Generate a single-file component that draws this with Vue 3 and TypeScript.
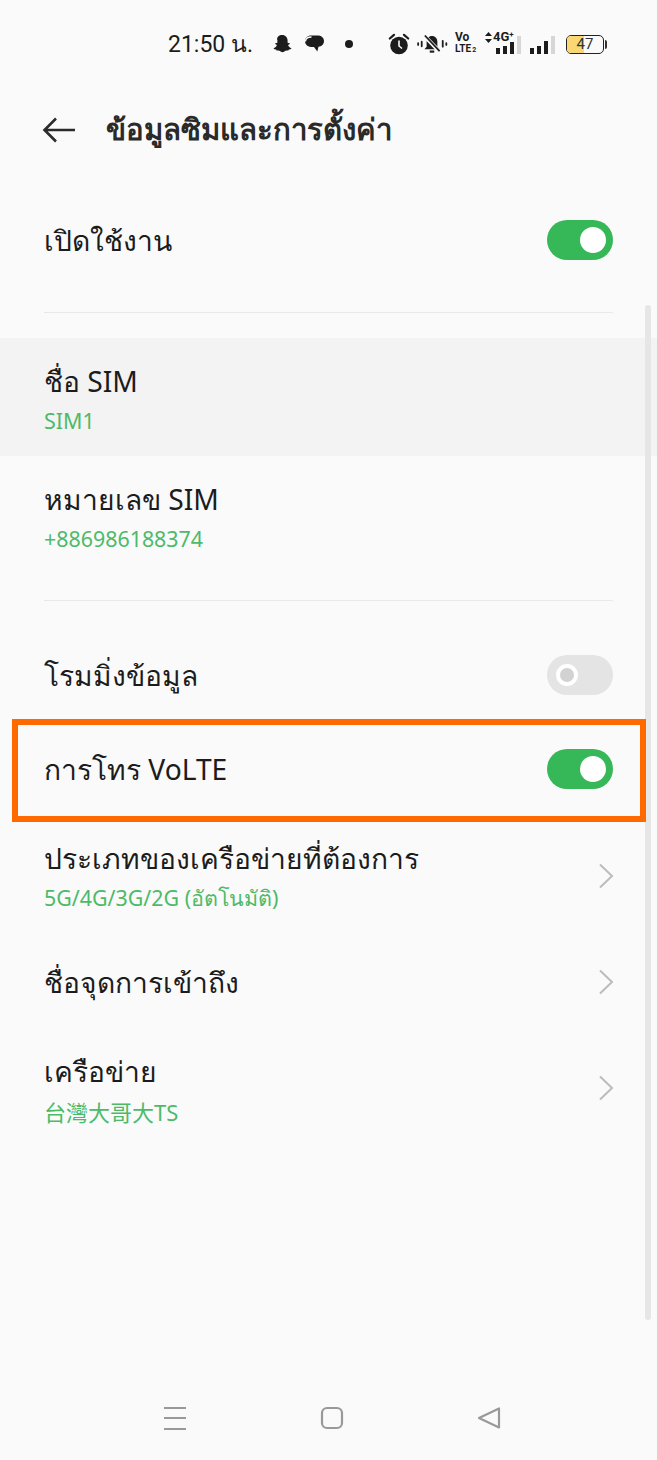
<template>
  <div class="screen">
    <!-- status bar -->
    <div class="statusbar">
      <span class="clock">21:50 น.</span>
      <svg class="ic snap" width="22" height="22" viewBox="0 0 22 22"><path d="M11 2c3.600 0 5.600 2.700 5.600 5.600 0 1 0 1.700.1 2.300.6.300 1.500-.2 1.900.3.400.6-.3 1.200-1.500 1.700.3 1.300 1.800 2.800 3.400 3.300-.2 1-1.800 1.100-2.700 1.300-.3.700-.1 1.200-1.100 1.100-1.500-.2-2.400.2-3.400 1-1.200.9-2.400.9-3.600 0-1-.8-1.900-1.200-3.400-1-1 .1-.8-.4-1.100-1.100-.9-.2-2.500-.3-2.700-1.300 1.600-.5 3.100-2 3.400-3.300-1.200-.5-1.900-1.100-1.500-1.700.4-.5 1.300 0 1.900-.3.100-.6.100-1.300.1-2.300C5.400 4.700 7.400 2 11 2z" fill="#1c1c1c"/></svg>
      <svg class="ic bubble" width="22" height="20" viewBox="0 0 22 20"><path d="M8 1.500h6.500c3.500 0 6.500 2 6.500 5.500s-2.500 5.500-5.500 5.800l-1.200 4.700-3.300-4.500H8C4 12.500 2 10 2 7s2.500-5.500 6-5.500z" fill="#1c1c1c"/><path d="M2.500 7.500C2.500 4.500 5 3 8.500 3" stroke="#fafafa" stroke-width="1.300" fill="none"/></svg>
      <span class="dot"></span>
      <svg class="ic alarm" width="24" height="24" viewBox="0 0 24 24"><circle cx="12" cy="13.500" r="8.800" fill="#1c1c1c"/><path d="M2.800 6.500 7 2.800M21.200 6.500 17 2.800" stroke="#1c1c1c" stroke-width="2.200" stroke-linecap="round"/><path d="M12 8.500v5.500l3 2.500" stroke="#fafafa" stroke-width="1.600" fill="none"/></svg>
      <svg class="ic mute" width="34" height="24" viewBox="0 0 38 24"><path d="M19 3c3.700 0 6 2.800 6 6.500V15l2.500 3h-17L13 15V9.500C13 5.800 15.300 3 19 3z" fill="#1c1c1c"/><path d="M16.500 20.500h5" stroke="#1c1c1c" stroke-width="2.400"/><path d="M10.500 3 28 21" stroke="#fafafa" stroke-width="4.500"/><path d="M11 2.500 27.500 20" stroke="#1c1c1c" stroke-width="2"/><path d="M7.500 9.500v5M3.500 11v2M31 8.500v6.500M35 11v2" stroke="#1c1c1c" stroke-width="2" stroke-linecap="round"/></svg>
      <span class="volte"><b class="vo">Vo</b><b class="lte">LTE<i>2</i></b></span>
      <div class="net">
        <span class="net-label"><svg width="7" height="11" viewBox="0 0 7 11"><path d="M3.500 0 7 4H0zM3.500 11 0 7h7z" fill="#1c1c1c"/></svg>4G<sup>+</sup></span>
        <span class="bars sim1"><i class="b1"></i><i class="b2"></i><i class="b3"></i><i class="b4"></i></span>
      </div>
      <span class="bars sim2"><i class="b1"></i><i class="b2"></i><i class="b3"></i><i class="b4"></i></span>
      <div class="battery">
        <div class="battery-fill"></div>
        <span class="battery-num">47</span>
      </div>
      <span class="battery-cap"></span>
    </div>

    <!-- header -->
    <header class="header">
      <svg class="back" width="34" height="28" viewBox="0 0 34 28"><path d="M33 14H3M14 2.500 2.500 14 14 25.500" stroke="#2b2b2b" stroke-width="2.600" fill="none"/></svg>
      <h1>ข้อมูลซิมและการตั้งค่า</h1>
    </header>

    <main class="list">
      <div class="row first">
        <span class="label">เปิดใช้งาน</span>
        <span class="switch on"></span>
      </div>
      <div class="divider d1"></div>

      <div class="row two pressed">
        <div class="text">
          <div class="label">ชื่อ SIM</div>
          <div class="sub">SIM1</div>
        </div>
      </div>
      <div class="row two">
        <div class="text">
          <div class="label">หมายเลข SIM</div>
          <div class="sub">+886986188374</div>
        </div>
      </div>
      <div class="divider d2"></div>

      <div class="row roam">
        <span class="label">โรมมิ่งข้อมูล</span>
        <span class="switch off"></span>
      </div>
      <div class="row volte-row">
        <span class="label">การโทร VoLTE</span>
        <span class="switch on"></span>
      </div>

      <div v-for="item in links" :key="item.title" class="row link">
        <div :class="{ 'cjk-text': item.cjk }">
          <div class="label">{{ item.title }}</div>
          <div v-if="item.sub" :class="['sub', { cjk: item.cjk }]">{{ item.sub }}</div>
        </div>
        <svg class="chev" width="16" height="26" viewBox="0 0 16 26"><path d="M2 1.500 14 13 2 24.500" stroke="#bcbcbc" stroke-width="2" fill="none"/></svg>
      </div>
    </main>

    <!-- overlays -->
    <div class="scrollbar"></div>
    <div class="highlight"></div>

    <!-- nav bar -->
    <nav class="navbar">
      <svg width="24" height="24" viewBox="0 0 24 24"><path d="M1 2h22M1 12h22M1 23h22" stroke="#999" stroke-width="2.200"/></svg>
      <svg width="24" height="24" viewBox="0 0 24 24"><rect x="2" y="2" width="20" height="20" rx="5" stroke="#999" stroke-width="2.200" fill="none"/></svg>
      <svg width="24" height="24" viewBox="0 0 24 24"><path d="M22 2.500v19L2 12z" stroke="#999" stroke-width="2.200" stroke-linejoin="round" fill="none"/></svg>
    </nav>
  </div>
</template>

<script setup lang="ts">
type LinkItem = {
  title: string
  sub?: string
  cjk?: boolean
}

const links: LinkItem[] = [
  { title: 'ประเภทของเครือข่ายที่ต้องการ', sub: '5G/4G/3G/2G (อัตโนมัติ)' },
  { title: 'ชื่อจุดการเข้าถึง' },
  { title: 'เครือข่าย', sub: '台灣大哥大TS', cjk: true },
]
</script>

<style>
html, body { margin: 0; background: #fafafa; }
</style>

<style scoped>
.screen {
  position: relative;
  width: 657px;
  height: 1460px;
  overflow: hidden;
  background: #fafafa;
  color: #1c1c1c;
  font-family: "Noto Sans", "Liberation Sans", "Noto Sans CJK TC", sans-serif;
}

/* status bar */
.statusbar { display: flex; align-items: center; height: 28px; padding: 30px 0 0 168px; }
.clock { flex: none; width: 84px; margin-right: 19px; font-family: "Roboto", "Noto Sans", sans-serif; font-size: 23px; white-space: nowrap; }
.ic { flex: none; }
.bubble { margin-left: 10px; }
.dot { width: 8px; height: 8px; border-radius: 50%; background: #1c1c1c; margin: 0 34px 0 20px; flex: none; }
.mute { margin-left: 4px; }
.volte { display: flex; flex: none; flex-direction: column; width: 22px; margin-left: 6px; font-family: "Liberation Sans Narrow", "Roboto", sans-serif; color: #1c1c1c; }
.vo { font-size: 12px; line-height: 11px; }
.lte { font-size: 10px; line-height: 11px; white-space: nowrap; }
.lte i { font-style: normal; font-size: 7px; margin-left: 1px; }
.net { position: relative; flex: none; width: 36px; height: 26px; margin-left: 8px; }
.net-label { display: flex; align-items: center; font: 700 13px/12px "Liberation Sans Narrow", "Roboto", sans-serif; }
.net-label svg { margin-right: 1px; }
.net-label sup { font-size: 8px; line-height: 8px; align-self: flex-start; }
.bars { display: flex; align-items: flex-end; gap: 3px; }
.bars i { display: block; width: 4px; background: #1c1c1c; }
.sim1 { position: absolute; right: 0; bottom: 3px; }
.sim1 .b1 { height: 6px; }
.sim1 .b2 { height: 8px; }
.sim1 .b3 { height: 12px; }
.sim1 .b4 { height: 18px; background: #d6d6d6; }
.sim2 { flex: none; margin-left: 9px; height: 19px; }
.sim2 .b1 { height: 6px; }
.sim2 .b2 { height: 8px; }
.sim2 .b3 { height: 13px; }
.sim2 .b4 { height: 18px; background: #d6d6d6; }
.battery {
  position: relative;
  flex: none;
  box-sizing: border-box;
  width: 38px;
  height: 19px;
  margin-left: 11px;
  border: 1.500px solid #222;
  border-radius: 5px;
  overflow: hidden;
}
.battery-fill { position: absolute; left: 0; top: 0; bottom: 0; width: 47%; background: #fbd774; }
.battery-num { position: relative; display: block; text-align: center; font: 15px/16px "Roboto", sans-serif; color: #333; }
.battery-cap { width: 2px; height: 9px; background: #333; border-radius: 0 2px 2px 0; margin-left: 1px; }

/* header */
.header { display: flex; align-items: center; height: 56px; margin-top: 44px; padding-left: 42px; }
.back { flex: none; margin-right: 30px; }
.header h1 { margin: -2px 0 0; font-size: 29.300px; font-weight: 700; color: #2a2a2a; white-space: nowrap; }

/* list */
.row { display: flex; align-items: center; justify-content: space-between; padding: 0 44px; box-sizing: border-box; }
.label { font-size: 28.200px; line-height: 38px; color: #1c1c1c; white-space: nowrap; }
.sub { font-size: 21.400px; line-height: 30px; color: #4dba68; margin-top: 6px; white-space: nowrap; }
.sub.cjk { font-size: 22px; margin-top: 7px; }
.cjk-text { padding-top: 2px; }
.first { height: 110px; margin-top: 27px; }
.divider { height: 1px; background: #e9e9e9; margin: 0 44px; }
.d1 { margin-top: 17px; margin-bottom: 25px; }
.d2 { margin-top: 26px; margin-bottom: 26px; }
.two { height: 118px; }
.text { padding-top: 4px; }
.pressed { background: #f3f3f3; }
.roam { height: 95px; }
.volte-row { height: 94px; margin-bottom: 7px; }
.link { height: 106px; }
.chev { flex: none; margin-right: -1px; }

/* switch */
.switch { position: relative; display: block; flex: none; width: 66px; height: 40px; border-radius: 20px; }
.switch.on { background: #36b858; }
.switch.on::after { content: ""; position: absolute; right: 7px; top: 7px; width: 26px; height: 26px; border-radius: 50%; background: #fff; }
.switch.off { background: #e4e4e4; }
.switch.off::after { content: ""; position: absolute; left: 9px; top: 9px; width: 14px; height: 14px; border: 4px solid #fff; border-radius: 50%; background: #d2d2d2; }

/* overlays */
.scrollbar { position: absolute; left: 645px; top: 305px; width: 6px; height: 1015px; border-radius: 3px; background: #e6e6e6; }
.highlight { position: absolute; left: 12px; top: 719px; width: 634px; height: 103px; box-sizing: border-box; border: 6px solid #ff6a00; }

/* nav */
.navbar { position: absolute; left: 163px; top: 1406px; width: 338px; display: flex; justify-content: space-between; }
</style>
